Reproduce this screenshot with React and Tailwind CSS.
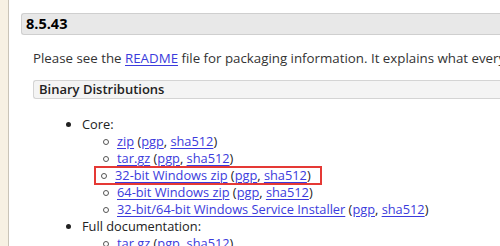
import React from 'react';

const A = ({ children }) => (
  <a href="#" className="text-[#3b3bdc] underline underline-offset-[2px]">{children}</a>
);

function Sub({ children, boxed }) {
  return (
    <div className={`flex items-center h-[17px] ${boxed ? 'ml-[-8px] pl-[6px] w-[226px] outline-2 outline-[#e53935] outline-offset-[-1px]' : ''}`}>
      <span className="w-[6px] h-[6px] rounded-full border border-[#555] mr-[8px] shrink-0" />
      <span>{children}</span>
    </div>
  );
}

function Links({ name }) {
  return (
    <>
      <A>{name}</A> (<A>pgp</A>, <A>sha512</A>)
    </>
  );
}

function Bullet({ children }) {
  return (
    <div className="flex items-center h-[17px] pl-[33px]">
      <span className="w-[5px] h-[5px] rounded-full bg-[#222] mr-[11px]" />
      <span>{children}</span>
    </div>
  );
}

export default function App() {
  return (
    <div
      className="flex w-[500px] h-[246px] overflow-hidden bg-white text-[#333] whitespace-nowrap"
      style={{ fontFamily: '"Open Sans", sans-serif' }}
    >
      <div className="w-[9px] shrink-0 bg-[#f7f1e3] border-r border-[#c9c4b8]" />
      <div className="flex-1 pl-[12px] pt-[13px] text-[13px]">
        <div className="h-[22px] bg-[#e8e8e8] border border-[#cfcfcf] border-r-0 rounded-l-[3px] flex items-center pl-[4px] text-[14.5px] font-bold text-black">
          8.5.43
        </div>
        <div className="pl-[12px]">
          <p className="mt-[15px] leading-[17px] text-[13.3px]">
            Please see the <A>README</A> file for packaging information. It explains what every distribution contains.
          </p>
          <div className="mt-[13px] h-[19px] bg-[#f4f4f4] border border-[#d4d4d4] border-r-0 rounded-l-[3px] flex items-center pl-[5px] font-semibold text-[#222]">
            Binary Distributions
          </div>
          <div className="mt-[17px] leading-[17px] text-[12.8px] text-[#222]">
            <Bullet>Core:</Bullet>
            <div className="pl-[70px]">
              <Sub><Links name="zip" /></Sub>
              <Sub><Links name="tar.gz" /></Sub>
              <Sub boxed><Links name="32-bit Windows zip" /></Sub>
              <Sub><Links name="64-bit Windows zip" /></Sub>
              <Sub><Links name="32-bit/64-bit Windows Service Installer" /></Sub>
            </div>
            <Bullet>Full documentation:</Bullet>
            <div className="pl-[70px]">
              <Sub><Links name="tar.gz" /></Sub>
            </div>
          </div>
        </div>
      </div>
    </div>
  );
}
